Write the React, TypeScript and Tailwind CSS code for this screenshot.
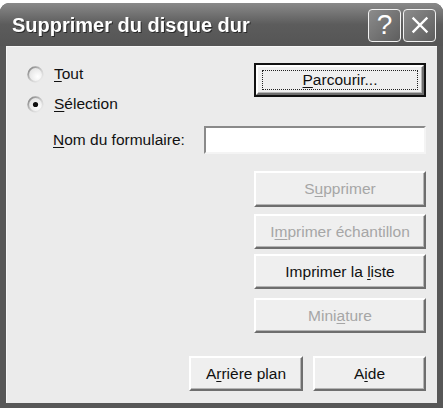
import React from "react";

const font = { fontFamily: '"Liberation Sans", Arial, sans-serif' };

function Key({ children }: { children: React.ReactNode }) {
  return <span className="underline underline-offset-2 decoration-1">{children}</span>;
}

function Radio({ checked }: { checked?: boolean }) {
  return (
    <svg width="17" height="17" viewBox="0 0 17 17" className="shrink-0">
      <defs>
        <linearGradient id={checked ? "rg1" : "rg0"} x1="0" y1="0" x2="1" y2="1">
          <stop offset="0" stopColor="#7c7c7c" />
          <stop offset="0.55" stopColor="#cfcfcf" />
          <stop offset="1" stopColor="#f4f4f4" />
        </linearGradient>
        <radialGradient id={checked ? "rf1" : "rf0"} cx="0.65" cy="0.65" r="0.7">
          <stop offset="0" stopColor="#ffffff" />
          <stop offset="1" stopColor="#e2e2e2" />
        </radialGradient>
      </defs>
      <circle
        cx="8.5"
        cy="8.5"
        r="7.3"
        fill={`url(#${checked ? "rf1" : "rf0"})`}
        stroke={`url(#${checked ? "rg1" : "rg0"})`}
        strokeWidth="1.8"
      />
      {checked && <circle cx="8.5" cy="8.5" r="2.6" fill="#111" />}
    </svg>
  );
}

function Button({
  children,
  disabled,
  def,
  className = "",
}: {
  children: React.ReactNode;
  disabled?: boolean;
  def?: boolean;
  className?: string;
}) {
  const inner = (
    <div
      className={`flex h-full w-full items-center justify-center border-2 border-t-white border-l-white border-b-[#6e6e6e] border-r-[#6e6e6e] bg-[#efefef] shadow-[inset_-1px_-1px_0_#b4b4b4] text-[15.5px] ${
        disabled ? "text-[#a6a6a6]" : "text-[#111]"
      }`}
    >
      {def ? (
        <div className="flex h-[calc(100%-6px)] w-[calc(100%-8px)] items-center justify-center border border-dotted border-[#222]">
          {children}
        </div>
      ) : (
        children
      )}
    </div>
  );
  return (
    <div className={`${def ? "border-2 border-[#111]" : ""} ${className}`}>{inner}</div>
  );
}

export default function App() {
  return (
    <div className="h-[409px] w-[443px] bg-white pt-[3px]" style={font}>
      <div className="flex h-[405px] w-[443px] flex-col rounded-t-[9px] bg-[#575757]">
        {/* Title bar */}
        <div className="flex h-[43px] items-center rounded-t-[9px] bg-gradient-to-b from-[#8a8a8a] via-[#5c5c5c] to-[#555] pl-[12px] pr-[7px]">
          <span className="flex-1 pt-[1px] text-[20px] font-bold text-white drop-shadow-[1px_1px_0_#2a2a2a]">
            Supprimer du disque dur
          </span>
          <div className="flex gap-[2px] pt-[1px]">
            <div className="flex h-[33px] w-[33px] items-center justify-center rounded-[4px] border-[1.5px] border-[#f2f2f2] bg-gradient-to-br from-[#8c8c8c] to-[#5e5e5e] text-[28px] leading-none text-white">
              ?
            </div>
            <div className="flex h-[33px] w-[33px] items-center justify-center rounded-[4px] border-[1.5px] border-[#f2f2f2] bg-gradient-to-br from-[#8c8c8c] to-[#5e5e5e]">
              <svg width="20" height="20" viewBox="0 0 20 20">
                <path d="M3.5 3.5 L16.5 16.5 M16.5 3.5 L3.5 16.5" stroke="white" strokeWidth="2.4" strokeLinecap="square" />
              </svg>
            </div>
          </div>
        </div>

        {/* Body */}
        <div className="mx-[6px] mb-[5px] flex-1 border-l border-t border-[#f7f7f7] bg-[#ebebeb] text-[15.5px] text-[#111]">
          <div className="flex pl-[20px] pr-[11px] pt-[16px]">
            <div className="flex flex-1 flex-col">
              <div className="mt-[1px] flex h-[20px] items-center gap-[10px]">
                <Radio />
                <span>
                  <Key>T</Key>out
                </span>
              </div>
              <div className="mt-[10px] flex h-[20px] items-center gap-[10px]">
                <Radio checked />
                <span>
                  <Key>S</Key>élection
                </span>
              </div>
            </div>
            <Button def className="h-[34px] w-[172px]">
              <span>
                <Key>P</Key>arcourir...
              </span>
            </Button>
          </div>

          <div className="mt-[12px] flex items-center pl-[46px] pr-[11px]">
            <span className="flex-1">
              <Key>N</Key>om du formulaire:
            </span>
            <div className="h-[28px] w-[222px] border-2 border-t-[#8a8a8a] border-l-[#8a8a8a] border-b-[#f4f4f4] border-r-[#f4f4f4] bg-white" />
          </div>

          <div className="flex flex-col items-end pr-[11px]">
            <Button disabled className="mt-[17px] h-[36px] w-[172px]">
              <span>
                S<Key>u</Key>pprimer
              </span>
            </Button>
            <Button disabled className="mt-[7px] h-[35px] w-[172px]">
              <span>
                I<Key>m</Key>primer échantillon
              </span>
            </Button>
            <Button className="mt-[5px] h-[35px] w-[172px]">
              <span>
                Imprimer la <Key>l</Key>iste
              </span>
            </Button>
            <Button disabled className="mt-[9px] h-[35px] w-[172px]">
              <span>
                Mini<Key>a</Key>ture
              </span>
            </Button>
            <div className="mt-[23px] flex gap-[10px]">
              <Button className="h-[35px] w-[114px]">
                <span>
                  A<Key>r</Key>rière plan
                </span>
              </Button>
              <Button className="h-[35px] w-[113px]">
                <span>
                  A<Key>i</Key>de
                </span>
              </Button>
            </div>
          </div>
        </div>
      </div>
    </div>
  );
}
